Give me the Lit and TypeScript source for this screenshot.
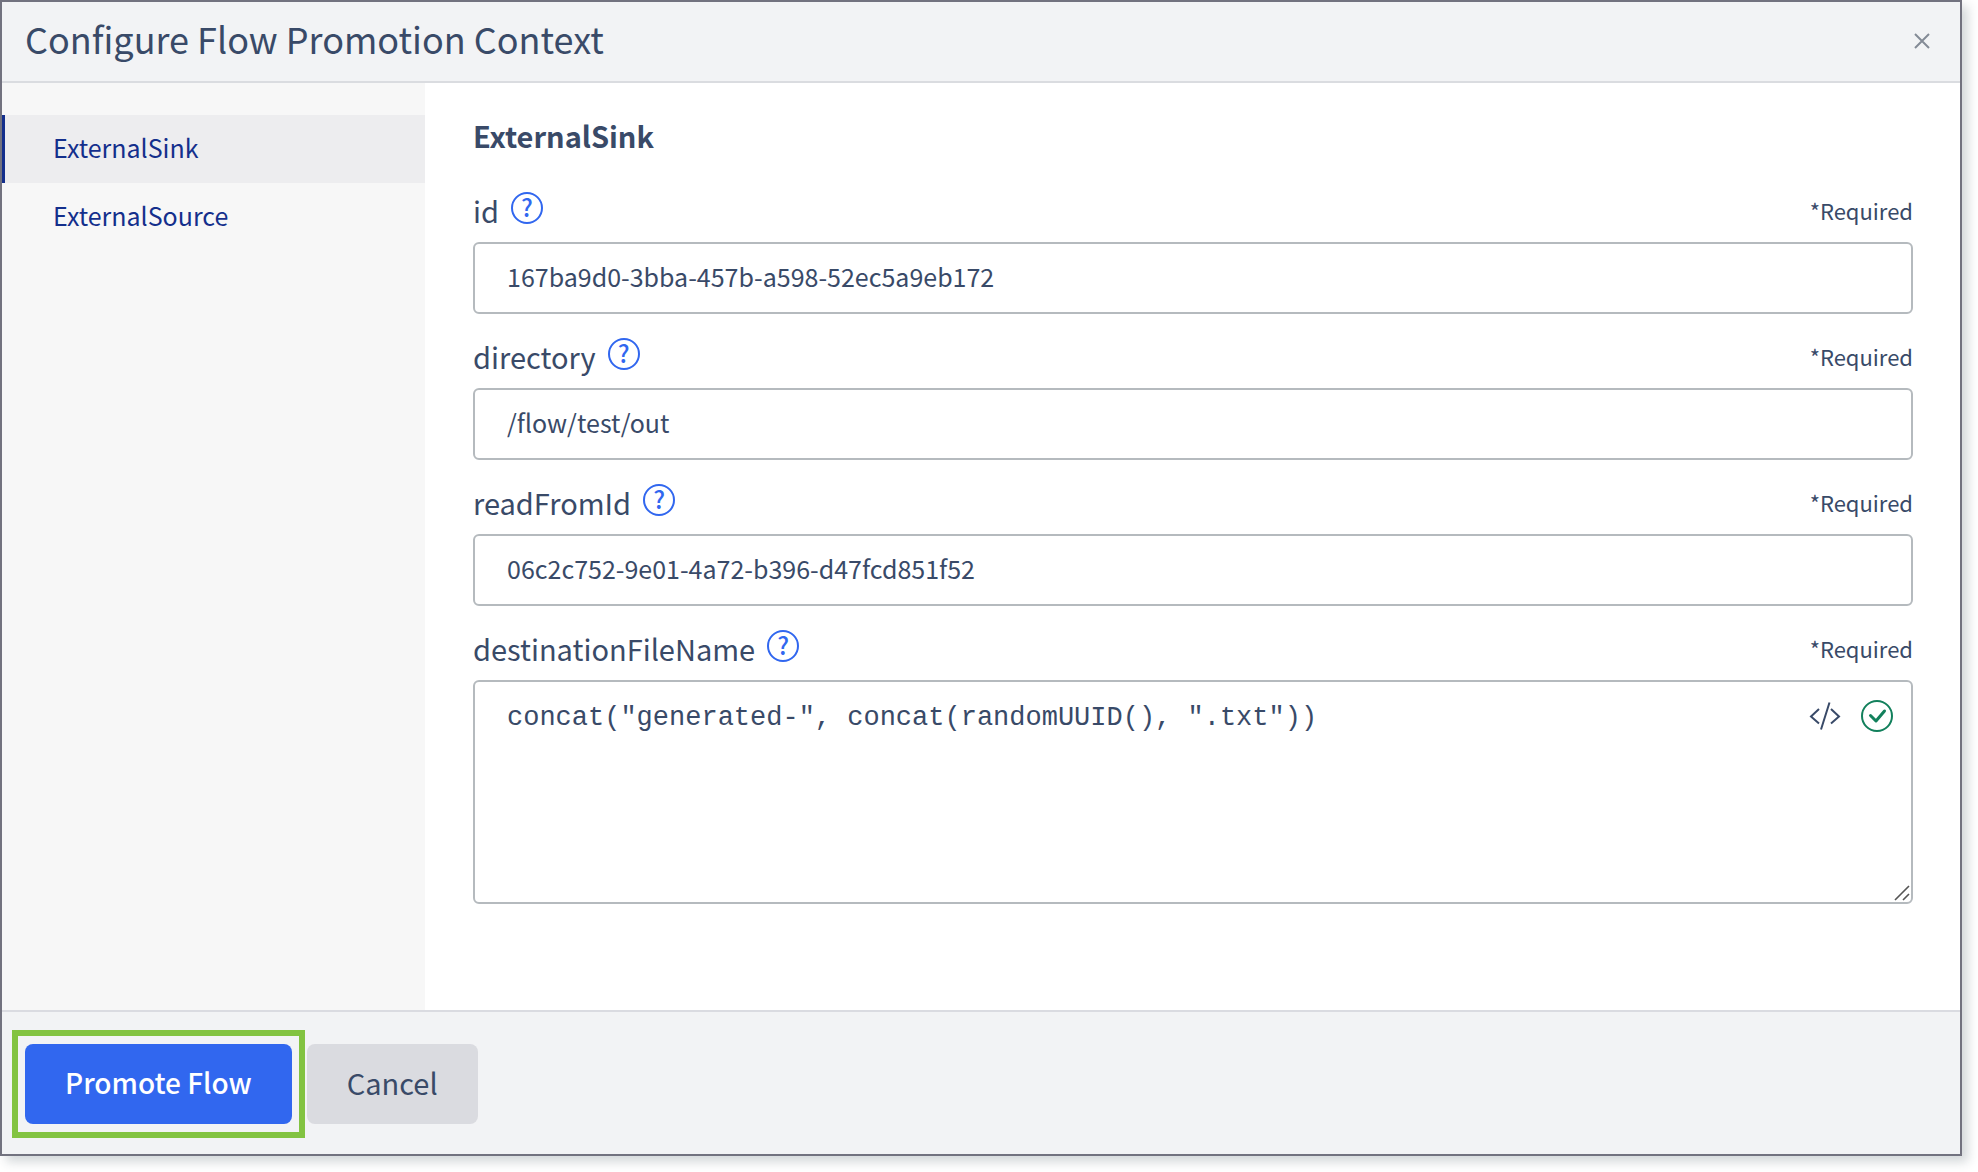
import { LitElement, html, css, nothing } from "lit";
import { customElement, property, state } from "lit/decorators.js";

interface Field {
  name: string;
  value: string;
  expression?: boolean;
}

const FIELDS: Field[] = [
  { name: "id", value: "167ba9d0-3bba-457b-a598-52ec5a9eb172" },
  { name: "directory", value: "/flow/test/out" },
  { name: "readFromId", value: "06c2c752-9e01-4a72-b396-d47fcd851f52" },
  {
    name: "destinationFileName",
    value: 'concat("generated-", concat(randomUUID(), ".txt"))',
    expression: true,
  },
];

const COMPONENTS = ["ExternalSink", "ExternalSource"];

@customElement("context-field")
export class ContextField extends LitElement {
  @property({ attribute: false }) field!: Field;

  static styles = css`
    :host {
      display: block;
    }
    * {
      box-sizing: border-box;
    }
    .head {
      display: flex;
      align-items: center;
      height: 50px;
      padding-bottom: 18px;
    }
    .label {
      font-size: 29px;
      line-height: 32px;
      padding-top: 4px;
    }
    .help {
      display: flex;
      align-items: center;
      justify-content: center;
      width: 32px;
      height: 32px;
      margin-left: 12px;
      padding: 0 0 2px;
      border: 2px solid #3167ef;
      border-radius: 50%;
      background: none;
      color: #3167ef;
      font: 500 24px/28px var(--ui-font);
      cursor: pointer;
    }
    .required {
      margin-left: auto;
      padding-top: 4px;
      font-size: 22px;
      line-height: 32px;
    }
    .control {
      display: block;
      width: 100%;
      border: 2px solid #b5babe;
      border-radius: 6px;
      background: #fff;
      color: #394a68;
      outline-color: #3167ef;
    }
    .text {
      height: 72px;
      padding: 0 32px 4px;
      font: 400 25px/36px var(--ui-font);
    }
    .editor {
      position: relative;
    }
    .code {
      height: 224px;
      min-height: 72px;
      padding: 20px 120px 16px 32px;
      font: 400 27px/32px "Liberation Mono", monospace;
      resize: vertical;
      overflow: hidden;
    }
    .code::-webkit-resizer {
      background: transparent;
    }
    .tools {
      position: absolute;
      top: 20px;
      right: 20px;
      display: flex;
      align-items: center;
      gap: 20px;
    }
    .tool {
      display: flex;
      padding: 0;
      border: 0;
      background: none;
      color: #394a68;
      cursor: pointer;
    }
    .valid {
      display: block;
      color: #12805c;
    }
    .grip {
      position: absolute;
      right: 3px;
      bottom: 3px;
      pointer-events: none;
    }
  `;

  private renderExpression(f: Field) {
    return html`
      <div class="editor">
        <textarea id="control" class="control code" spellcheck="false" .value=${f.value}></textarea>
        <div class="tools">
          <button class="tool" type="button" aria-label="Open expression editor">
            <svg width="32" height="32" viewBox="0 0 32 32" fill="none" stroke="currentColor" stroke-width="2">
              <path d="M10 9 2 16.500 10 23.500M22 9l8 7.500-8 7M20.500 2.500l-8.500 27" />
            </svg>
          </button>
          <svg class="valid" role="img" aria-label="Valid" width="32" height="32" viewBox="0 0 32 32" fill="none" stroke="currentColor">
            <circle cx="16" cy="16" r="15" stroke-width="2" />
            <path d="M9.500 15.500 15 21 23.500 11" stroke-width="3" stroke-linecap="round" stroke-linejoin="round" />
          </svg>
        </div>
        <svg class="grip" width="16" height="16" viewBox="0 0 16 16" fill="none" stroke="#555" stroke-width="1.600">
          <path d="M1 15 15 1M9 15l6-6" />
        </svg>
      </div>
    `;
  }

  render() {
    const f = this.field;
    if (!f) return nothing;
    return html`
      <div class="head">
        <label class="label" for="control">${f.name}</label>
        <button class="help" type="button" aria-label="Help for ${f.name}">?</button>
        <span class="required">*Required</span>
      </div>
      ${f.expression
        ? this.renderExpression(f)
        : html`<input id="control" class="control text" type="text" required .value=${f.value} />`}
    `;
  }
}

@customElement("app-root")
export class AppRoot extends LitElement {
  @state() private selected = COMPONENTS[0];

  static styles = css`
    :host {
      --ui-font: "Noto Sans CJK SC", "Noto Sans", sans-serif;
      display: flex;
      min-height: 100vh;
      box-sizing: border-box;
      padding: 0 16px 16px 0;
      background: #fff;
      color: #394a68;
      font-family: var(--ui-font);
    }
    * {
      box-sizing: border-box;
    }
    .dialog {
      flex: 1;
      display: flex;
      flex-direction: column;
      min-width: 0;
      border: 2px solid #72727f;
      background: #fff;
      box-shadow: 6px 6px 10px rgba(40, 60, 70, 0.2);
    }
    .header {
      display: flex;
      align-items: center;
      justify-content: space-between;
      height: 81px;
      padding: 0 28px 0 23px;
      border-bottom: 2px solid #dadce0;
      background: #f2f3f5;
    }
    .title {
      margin: 0;
      padding-bottom: 8px;
      font-size: 36px;
      font-weight: 400;
      line-height: 48px;
    }
    .close {
      display: flex;
      padding: 0;
      border: 0;
      background: none;
      color: #848b96;
      cursor: pointer;
    }
    .body {
      flex: 1;
      display: flex;
    }
    .nav {
      flex: none;
      width: 423px;
      padding-top: 32px;
      background: #f7f7f7;
    }
    .item {
      display: flex;
      align-items: center;
      height: 68px;
      padding: 0 0 4px 48px;
      border-left: 3px solid transparent;
      color: #142f8c;
      font-size: 25px;
      line-height: 36px;
      text-decoration: none;
    }
    .item[aria-current="true"] {
      border-left-color: #142f8c;
      background: #ededef;
    }
    .form {
      flex: 1;
      display: flex;
      flex-direction: column;
      gap: 24px;
      min-width: 0;
      padding: 32px 47px 48px 48px;
    }
    .heading {
      margin: 0 0 13px;
      font-size: 29px;
      font-weight: 700;
      line-height: 40px;
    }
    .footer {
      display: flex;
      align-items: center;
      gap: 2px;
      height: 144px;
      padding: 2px 10px 0;
      border-top: 2px solid #dadbe1;
      background: #f2f3f5;
    }
    .highlight {
      padding: 8px 7px;
      border: 6px solid #82c341;
    }
    .button {
      display: block;
      height: 80px;
      padding: 0 40px 4px;
      border: 0;
      border-radius: 8px;
      font: 400 29px/40px var(--ui-font);
      cursor: pointer;
    }
    .primary {
      background: #3167ef;
      color: #fff;
      font-size: 28px;
      font-weight: 500;
    }
    .secondary {
      background: #dadbe0;
      color: #394a68;
    }
  `;

  private select(event: Event, name: string) {
    event.preventDefault();
    this.selected = name;
  }

  render() {
    return html`
      <section class="dialog" role="dialog" aria-labelledby="title">
        <header class="header">
          <h1 class="title" id="title">Configure Flow Promotion Context</h1>
          <button class="close" type="button" aria-label="Close">
            <svg width="20" height="20" viewBox="0 0 20 20" fill="none" stroke="currentColor" stroke-width="2">
              <path d="M3 2l14 14M17 2l-14 14" />
            </svg>
          </button>
        </header>
        <div class="body">
          <nav class="nav">
            ${COMPONENTS.map(
              (name) => html`<a
                class="item"
                href="#${name}"
                aria-current=${this.selected === name ? "true" : "false"}
                @click=${(e: Event) => this.select(e, name)}
                >${name}</a
              >`
            )}
          </nav>
          <main class="form">
            <h2 class="heading">${this.selected}</h2>
            ${FIELDS.map((f) => html`<context-field .field=${f}></context-field>`)}
          </main>
        </div>
        <footer class="footer">
          <div class="highlight">
            <button class="button primary" type="button">Promote Flow</button>
          </div>
          <button class="button secondary" type="button">Cancel</button>
        </footer>
      </section>
    `;
  }
}
